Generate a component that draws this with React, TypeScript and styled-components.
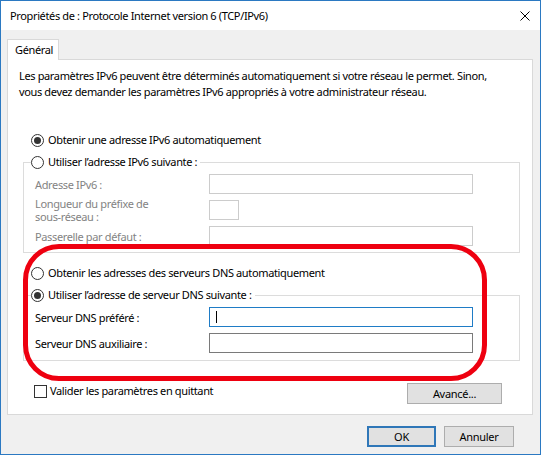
import React from 'react';
import styled, { createGlobalStyle, css } from 'styled-components';

const GlobalStyle = createGlobalStyle`
  html, body {
    margin: 0;
    padding: 0;
    background: #ffffff;
  }
  * {
    box-sizing: border-box;
  }
`;

const FONT = `"Noto Sans", "Open Sans", sans-serif`;

const Window = styled.div`
  width: 541px;
  height: 455px;
  border: 1px solid #2b79c2;
  background: #f0f0f0;
  font-family: ${FONT};
  font-size: 11px;
  letter-spacing: -0.36px;
  color: #000;
  display: flex;
  flex-direction: column;
  white-space: nowrap;
`;

const TitleBar = styled.div`
  height: 29px;
  flex-shrink: 0;
  background: #ffffff;
  display: flex;
  align-items: center;
  justify-content: space-between;
  padding: 0 9px 0 9px;
`;

const Title = styled.span`
  font-size: 11px;
  letter-spacing: -0.36px;
  line-height: 16px;
`;

const CloseIcon = styled.svg`
  width: 10px;
  height: 10px;
  margin-right: 1px;
`;

const Body = styled.div`
  flex: 1;
  display: flex;
  flex-direction: column;
  padding: 9px 7px 0 6px;
`;

const TabStrip = styled.div`
  display: flex;
  height: 20px;
  flex-shrink: 0;
  position: relative;
  z-index: 1;
`;

const Tab = styled.div`
  width: 52px;
  height: 21px;
  background: #ffffff;
  border: 1px solid #d9d9d9;
  border-bottom: none;
  padding-left: 7px;
  line-height: 19px;
`;

const Panel = styled.div`
  position: relative;
  height: 356px;
  flex-shrink: 0;
  background: #ffffff;
  border: 1px solid #d9d9d9;
  display: flex;
  flex-direction: column;
  padding-top: 8px;

  & > * {
    flex-shrink: 0;
  }
`;

const Description = styled.p`
  margin: 0 0 0 11px;
  line-height: 16px;
`;

const RadioRow = styled.label<{ $top: number }>`
  display: flex;
  align-items: center;
  gap: 4px;
  height: 16px;
  line-height: 16px;
  margin: ${p => p.$top}px 0 0 23px;
`;

const RadioDot = styled.span<{ $checked?: boolean }>`
  width: 13px;
  height: 13px;
  border-radius: 50%;
  border: 1px solid #333333;
  background: #ffffff;
  display: inline-flex;
  align-items: center;
  justify-content: center;
  flex-shrink: 0;
  ${p =>
    p.$checked &&
    css`
      &::after {
        content: '';
        width: 7px;
        height: 7px;
        border-radius: 50%;
        background: #333333;
      }
    `}
`;

const Group = styled.fieldset<{ $top: number; $padBottom: number }>`
  margin: ${p => p.$top}px 12px 0 15px;
  padding: 4px 0 ${p => p.$padBottom}px 0;
  border: 1px solid #dcdcdc;
  min-width: 0;
`;

const Legend = styled.legend`
  margin-left: 7px;
  padding: 0 3px 0 0;
  display: flex;
  align-items: center;
  gap: 4px;
  height: 16px;
  line-height: 16px;
  background: #ffffff;
`;

const FieldGrid = styled.div<{ $gap: number }>`
  display: grid;
  grid-template-columns: 174px auto;
  grid-auto-rows: 20px;
  row-gap: ${p => p.$gap}px;
  padding-left: 11px;
  align-items: center;
`;

const FieldLabel = styled.span<{ $disabled?: boolean }>`
  color: ${p => (p.$disabled ? '#838383' : '#000000')};
  line-height: 13px;
`;

const TextBox = styled.div<{ $state: 'disabled' | 'normal' | 'focus'; $width?: number }>`
  width: ${p => p.$width ?? 264}px;
  height: 20px;
  background: #ffffff;
  border: 1px solid
    ${p => (p.$state === 'disabled' ? '#cccccc' : p.$state === 'focus' ? '#1f7cc6' : '#7a7a7a')};
  display: flex;
  align-items: center;
  padding-left: 6px;
`;

const Caret = styled.span`
  width: 1px;
  height: 12px;
  background: #000;
`;

const BottomRow = styled.div`
  display: flex;
  justify-content: space-between;
  align-items: flex-start;
  margin: 22px 30px 0 26px;
`;

const CheckRow = styled.label`
  display: flex;
  align-items: center;
  gap: 3px;
  height: 16px;
  line-height: 16px;
`;

const CheckBox = styled.span`
  width: 13px;
  height: 13px;
  border: 1px solid #333333;
  background: #ffffff;
  flex-shrink: 0;
`;

const Button = styled.button<{ $default?: boolean; $width: number }>`
  width: ${p => p.$width}px;
  height: 21px;
  background: #e1e1e1;
  border: ${p => (p.$default ? '2px solid #2f77b8' : '1px solid #adadad')};
  font-family: ${FONT};
  font-size: 11px;
  letter-spacing: -0.3px;
  color: #000;
  padding: 0;
  line-height: 16px;
`;

const Footer = styled.div`
  display: flex;
  justify-content: flex-end;
  gap: 8px;
  margin-top: 11px;
  padding-right: 19px;
`;

const Highlight = styled.div`
  position: absolute;
  left: 15px;
  top: 184px;
  width: 464px;
  height: 137px;
  border: 5px solid #ee0010;
  border-radius: 36px;
  pointer-events: none;
`;

export default function App() {
  return (
    <>
      <GlobalStyle />
      <Window>
        <TitleBar>
          <Title>Propriétés de : Protocole Internet version 6 (TCP/IPv6)</Title>
          <CloseIcon viewBox="0 0 10 10">
            <path d="M0.5 0.5 L9.5 9.5 M9.5 0.5 L0.5 9.5" stroke="#000" strokeWidth="1" fill="none" />
          </CloseIcon>
        </TitleBar>
        <Body>
          <TabStrip>
            <Tab>Général</Tab>
          </TabStrip>
          <Panel>
            <Description>
              Les paramètres IPv6 peuvent être déterminés automatiquement si votre réseau le permet. Sinon,
              <br />
              vous devez demander les paramètres IPv6 appropriés à votre administrateur réseau.
            </Description>

            <RadioRow $top={32}>
              <RadioDot $checked />
              Obtenir une adresse IPv6 automatiquement
            </RadioRow>

            <Group $top={6} $padBottom={6}>
              <Legend>
                <RadioDot />
                Utiliser l’adresse IPv6 suivante :
              </Legend>
              <FieldGrid $gap={6}>
                <FieldLabel $disabled>Adresse IPv6 :</FieldLabel>
                <TextBox $state="disabled" />
                <FieldLabel $disabled>
                  Longueur du préfixe de
                  <br />
                  sous-réseau :
                </FieldLabel>
                <TextBox $state="disabled" $width={30} />
                <FieldLabel $disabled>Passerelle par défaut :</FieldLabel>
                <TextBox $state="disabled" />
              </FieldGrid>
            </Group>

            <RadioRow $top={12}>
              <RadioDot />
              Obtenir les adresses des serveurs DNS automatiquement
            </RadioRow>

            <Group $top={6} $padBottom={7}>
              <Legend>
                <RadioDot $checked />
                Utiliser l’adresse de serveur DNS suivante :
              </Legend>
              <FieldGrid $gap={6}>
                <FieldLabel>Serveur DNS préféré :</FieldLabel>
                <TextBox $state="focus">
                  <Caret />
                </TextBox>
                <FieldLabel>Serveur DNS auxiliaire :</FieldLabel>
                <TextBox $state="normal" />
              </FieldGrid>
            </Group>

            <BottomRow>
              <CheckRow>
                <CheckBox />
                Valider les paramètres en quittant
              </CheckRow>
              <Button $width={95}>Avancé...</Button>
            </BottomRow>

            <Highlight />
          </Panel>
          <Footer>
            <Button $default $width={69}>OK</Button>
            <Button $width={70}>Annuler</Button>
          </Footer>
        </Body>
      </Window>
    </>
  );
}
